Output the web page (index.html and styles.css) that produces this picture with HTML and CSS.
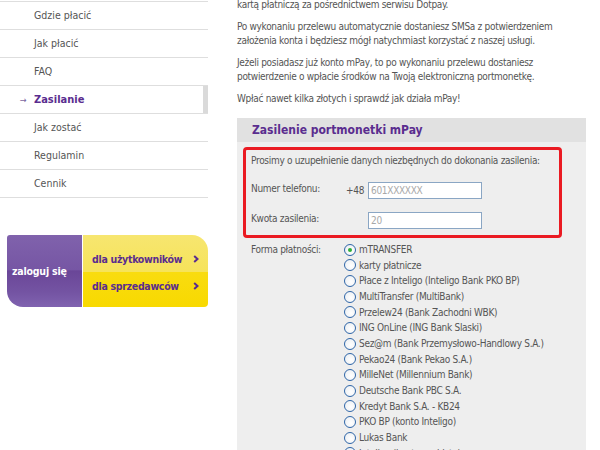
FILE: index.html
```html
<!DOCTYPE html>
<html lang="pl">
<head>
<meta charset="utf-8">
<title>mPay - Zasilanie</title>
<link rel="stylesheet" href="styles.css">
</head>
<body>
<div class="page">
  <aside class="sidebar">
    <ul class="nav">
      <li class="nav-item">Gdzie płacić</li>
      <li class="nav-item">Jak płacić</li>
      <li class="nav-item">FAQ</li>
      <li class="nav-item active">Zasilanie</li>
      <li class="nav-item">Jak zostać</li>
      <li class="nav-item">Regulamin</li>
      <li class="nav-item">Cennik</li>
    </ul>
    <div class="login">
      <div class="login-label">zaloguj się</div>
      <div class="login-links">
        <a class="login-link users">dla użytkowników <svg class="chev" width="6" height="8" viewBox="0 0 6 8"><polyline points="1.2,1 4.5,4 1.2,7" fill="none" stroke="#5a2d8f" stroke-width="2"/></svg></a>
        <a class="login-link sellers">dla sprzedawców <svg class="chev" width="6" height="8" viewBox="0 0 6 8"><polyline points="1.2,1 4.5,4 1.2,7" fill="none" stroke="#5a2d8f" stroke-width="2"/></svg></a>
      </div>
    </div>
  </aside>
  <main class="content">
    <p class="para first">kartą płatniczą za pośrednictwem serwisu Dotpay.</p>
    <p class="para">Po wykonaniu przelewu automatycznie dostaniesz SMSa z potwierdzeniem założenia konta i będziesz mógł natychmiast korzystać z naszej usługi.</p>
    <p class="para">Jeżeli posiadasz już konto mPay, to po wykonaniu przelewu dostaniesz potwierdzenie o wpłacie środków na Twoją elektroniczną portmonetkę.</p>
    <p class="para">Wpłać nawet kilka złotych i sprawdź jak działa mPay!</p>
    <section class="panel">
      <h2 class="panel-title">Zasilenie portmonetki mPay</h2>
      <div class="panel-body">
        <div class="required">
          <p class="req-intro">Prosimy o uzupełnienie danych niezbędnych do dokonania zasilenia:</p>
          <div class="field-grid">
            <label class="field-label">Numer telefonu:</label>
            <span class="prefix">+48</span>
            <input class="field-input" type="text" value="601XXXXXX">
            <label class="field-label">Kwota zasilenia:</label>
            <span class="prefix"></span>
            <input class="field-input" type="text" value="20">
          </div>
        </div>
        <div class="payment">
          <div class="pay-label">Forma płatności:</div>
          <ul class="pay-list">
            <li class="pay-item"><span class="radio checked"></span>mTRANSFER</li>
            <li class="pay-item"><span class="radio"></span>karty płatnicze</li>
            <li class="pay-item"><span class="radio"></span>Płace z Inteligo (Inteligo Bank PKO BP)</li>
            <li class="pay-item"><span class="radio"></span>MultiTransfer (MultiBank)</li>
            <li class="pay-item"><span class="radio"></span>Przelew24 (Bank Zachodni WBK)</li>
            <li class="pay-item"><span class="radio"></span>ING OnLine (ING Bank Slaski)</li>
            <li class="pay-item"><span class="radio"></span>Sez@m (Bank Przemysłowo-Handlowy S.A.)</li>
            <li class="pay-item"><span class="radio"></span>Pekao24 (Bank Pekao S.A.)</li>
            <li class="pay-item"><span class="radio"></span>MilleNet (Millennium Bank)</li>
            <li class="pay-item"><span class="radio"></span>Deutsche Bank PBC S.A.</li>
            <li class="pay-item"><span class="radio"></span>Kredyt Bank S.A. - KB24</li>
            <li class="pay-item"><span class="radio"></span>PKO BP (konto Inteligo)</li>
            <li class="pay-item"><span class="radio"></span>Lukas Bank</li>
            <li class="pay-item"><span class="radio"></span>Inteligo (konto osobiste)</li>
          </ul>
        </div>
      </div>
    </section>
  </main>
</div>
</body>
</html>
```
FILE: styles.css
```css
html, body {
  margin: 0;
  padding: 0;
  background: #ffffff;
}
body {
  font-family: "DejaVu Sans Condensed", "DejaVu Sans", sans-serif;
  font-size: 10px;
  letter-spacing: -0.3px;
  color: #555555;
  overflow: hidden;
}
.page {
  display: flex;
  align-items: flex-start;
}
.sidebar {
  width: 208px;
  flex: none;
  letter-spacing: 0;
}
.nav {
  list-style: none;
  margin: 0;
  padding: 1px 0 0 0;
}
.nav-item {
  height: 27px;
  line-height: 27px;
  border-top: 1px solid #dedede;
  padding-left: 34px;
  color: #555555;
  font-size: 10.5px;
}
.nav-item:last-child {
  border-bottom: 1px solid #dedede;
}
.nav-item.active {
  font-weight: bold;
  color: #5a2d8f;
  font-size: 11px;
  box-shadow: inset -5px 0 0 #dadada;
}
.nav-item.active::before {
  content: "→";
  display: inline-block;
  width: 14px;
  margin-left: -14px;
  font-weight: normal;
  font-size: 9px;
  color: #7a64a0;
}
.login {
  display: flex;
  margin: 37px 0 0 7px;
  height: 72px;
}
.login-label {
  width: 75px;
  flex: none;
  display: flex;
  align-items: center;
  padding-left: 5px;
  box-sizing: border-box;
  color: #ffffff;
  font-weight: bold;
  font-size: 10.5px;
  letter-spacing: -0.2px;
  border-radius: 3px 0 0 16px;
  background: linear-gradient(#8062ac 0%, #7656a4 48%, #6a4698 50%, #7454a3 80%, #8063b0 100%);
}
.login-links {
  margin-left: 1px;
  flex: 1;
  display: flex;
  flex-direction: column;
  border-radius: 0 16px 4px 0;
  overflow: hidden;
}
.login-link {
  flex: 1;
  display: flex;
  align-items: center;
  justify-content: space-between;
  padding: 0 9px 0 9px;
  color: #5a2d8f;
  font-weight: bold;
  font-size: 10.5px;
  letter-spacing: -0.3px;
}
.login-link.users {
  background: linear-gradient(#f7e670, #f6e35a);
  padding-top: 10px;
}
.login-link.sellers {
  background: linear-gradient(#f9dc10, #f8d900);
  padding-bottom: 8px;
}
.chev {
  display: block;
}
.content {
  margin-left: 29px;
  width: 349px;
  flex: none;
  margin-top: -2px;
}
.para {
  margin: 0 0 8px 0;
  line-height: 14px;
  color: #555555;
}
.para.first {
  margin-bottom: 8px;
}
.panel {
  margin-top: 12px;
  background: #eeeeee;
}
.panel-title {
  margin: 0;
  height: 24px;
  line-height: 25px;
  padding-left: 15px;
  background: #e1e1e1;
  font-size: 12px;
  font-weight: bold;
  letter-spacing: 0;
  color: #5a2d8f;
}
.panel-body {
  padding: 5px 0 20px 0;
}
.required {
  margin-left: 6px;
  width: 319px;
  box-sizing: border-box;
  border: 3px solid #ea1a22;
  border-radius: 4px;
  padding: 4px 0 6px 5px;
}
.req-intro {
  margin: 0 0 14px 0;
  line-height: 14px;
  white-space: nowrap;
}
.field-grid {
  display: grid;
  grid-template-columns: 95px 22px 114px;
  grid-auto-rows: 17px;
  row-gap: 13px;
  align-items: center;
}
.field-label {
  line-height: 14px;
  align-self: start;
}
.prefix {
  line-height: 17px;
}
.field-input {
  box-sizing: border-box;
  width: 114px;
  height: 17px;
  margin: 0;
  border: 1px solid #8aa6c4;
  background: #ffffff;
  padding: 0 2px;
  font-family: inherit;
  font-size: 10px;
  letter-spacing: -0.3px;
  color: #a8a8a8;
  outline: none;
}
.payment {
  display: flex;
  margin: 4px 0 0 14px;
}
.pay-label {
  width: 93px;
  flex: none;
  line-height: 15.67px;
}
.pay-list {
  list-style: none;
  margin: 0;
  padding: 0;
}
.pay-item {
  height: 15.67px;
  line-height: 15.67px;
  display: flex;
  align-items: center;
  white-space: nowrap;
}
.radio {
  width: 12px;
  height: 12px;
  box-sizing: border-box;
  border: 1.5px solid #2f66a8;
  border-radius: 50%;
  background: radial-gradient(circle at 60% 60%, #ffffff 0%, #e8ecf0 100%);
  margin-right: 3px;
  flex: none;
  display: flex;
  align-items: center;
  justify-content: center;
}
.radio.checked::after {
  content: "";
  width: 4px;
  height: 4px;
  border-radius: 50%;
  background: #2fae3a;
}
```
